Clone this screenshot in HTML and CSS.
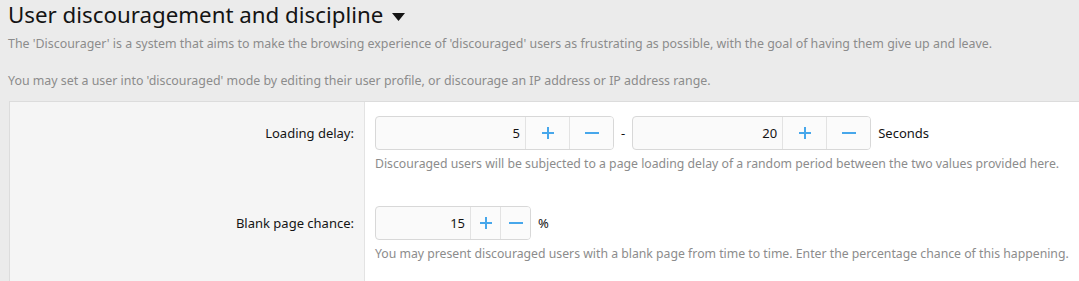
FILE: index.html
```html
<!DOCTYPE html>
<html lang="en">
<head>
  <meta charset="UTF-8">
  <title>User discouragement and discipline</title>
  <link rel="stylesheet" href="styles.css">
</head>
<body>
  <div class="page-header">
    <h1 class="page-title">User discouragement and discipline
      <svg class="caret" width="13" height="8" viewBox="0 0 13 8"><path d="M0 0H13L6.5 8Z" fill="#141414"/></svg>
    </h1>
    <div class="page-description">
      <p>The 'Discourager' is a system that aims to make the browsing experience of 'discouraged' users as frustrating as possible, with the goal of having them give up and leave.</p>
      <p>You may set a user into 'discouraged' mode by editing their user profile, or discourage an IP address or IP address range.</p>
    </div>
  </div>

  <div class="block">
    <div class="form-row">
      <div class="form-label">Loading delay:</div>
      <div class="form-input">
        <div class="input-line">
          <div class="spin wide">
            <span class="spin-value">5</span>
            <span class="spin-btn">
              <svg width="12" height="12" viewBox="0 0 12 12"><path d="M6 0V12M0 6H12" stroke="#47a7eb" stroke-width="2"/></svg>
            </span>
            <span class="spin-btn">
              <svg width="14" height="12" viewBox="0 0 14 12"><path d="M0 6H14" stroke="#47a7eb" stroke-width="2"/></svg>
            </span>
          </div>
          <span class="sep">-</span>
          <div class="spin wide">
            <span class="spin-value">20</span>
            <span class="spin-btn">
              <svg width="12" height="12" viewBox="0 0 12 12"><path d="M6 0V12M0 6H12" stroke="#47a7eb" stroke-width="2"/></svg>
            </span>
            <span class="spin-btn">
              <svg width="14" height="12" viewBox="0 0 14 12"><path d="M0 6H14" stroke="#47a7eb" stroke-width="2"/></svg>
            </span>
          </div>
          <span class="unit">Seconds</span>
        </div>
        <div class="explain">Discouraged users will be subjected to a page loading delay of a random period between the two values provided here.</div>
      </div>
    </div>

    <div class="form-row last">
      <div class="form-label">Blank page chance:</div>
      <div class="form-input">
        <div class="input-line">
          <div class="spin narrow">
            <span class="spin-value">15</span>
            <span class="spin-btn">
              <svg width="12" height="12" viewBox="0 0 12 12"><path d="M6 0V12M0 6H12" stroke="#47a7eb" stroke-width="2"/></svg>
            </span>
            <span class="spin-btn">
              <svg width="14" height="12" viewBox="0 0 14 12"><path d="M0 6H14" stroke="#47a7eb" stroke-width="2"/></svg>
            </span>
          </div>
          <span class="unit">%</span>
        </div>
        <div class="explain">You may present discouraged users with a blank page from time to time. Enter the percentage chance of this happening.</div>
      </div>
    </div>
  </div>
</body>
</html>
```

FILE: styles.css
```css
* {
  box-sizing: border-box;
}
body {
  margin: 0;
  background-color: #ebebeb;
  font-family: "Noto Sans", "Open Sans", sans-serif;
  color: #141414;
  overflow: hidden;
}
.page-header {
  padding: 0 8px;
}
.page-title {
  margin: 0;
  font-size: 22.3px;
  font-weight: 400;
  line-height: 30px;
}
.caret {
  vertical-align: middle;
  margin-left: 3px;
}
.page-description {
  margin-top: 5px;
  font-size: 12.4px;
  color: #8c8c8c;
  line-height: 17px;
}
.page-description p {
  margin: 0 0 20px;
}
.block {
  margin-left: 9px;
  margin-top: -8px;
  border-top: 1px solid #dcdcdc;
  border-left: 1px solid #dcdcdc;
  background-color: #fff;
}
.form-row {
  display: grid;
  grid-template-columns: 355px 1fr;
}
.form-label {
  background-color: #f5f5f5;
  border-right: 1px solid #e3e3e3;
  padding: 14px 10px 0 0;
  text-align: right;
  font-size: 13px;
  line-height: 34px;
}
.form-input {
  padding: 14px 10px 19px 10px;
}
.last .form-input {
  padding-bottom: 30px;
}
.input-line {
  display: flex;
  align-items: center;
  gap: 6px;
  font-size: 13px;
}
.spin {
  display: flex;
  height: 34px;
  border: 1px solid #d8d8d8;
  border-radius: 4px;
  background-color: #fafafa;
  overflow: hidden;
}
.spin-value {
  display: flex;
  align-items: center;
  justify-content: flex-end;
  padding-right: 5px;
  font-size: 13px;
}
.spin-btn {
  display: flex;
  align-items: center;
  justify-content: center;
  border-left: 1px solid #e3e3e3;
  background-color: #fbfbfb;
}
.wide {
  width: 239px;
}
.wide .spin-value {
  width: 149px;
}
.wide .spin-btn {
  width: 44px;
}
.narrow {
  width: 156px;
}
.narrow .spin-value {
  width: 94px;
}
.narrow .spin-btn {
  width: 30px;
}
.sep {
  margin: 0 1px;
}
.unit {
  margin-left: 1px;
}
.explain {
  margin-top: 5px;
  font-size: 12.25px;
  line-height: 18px;
  color: #8c8c8c;
}
```
